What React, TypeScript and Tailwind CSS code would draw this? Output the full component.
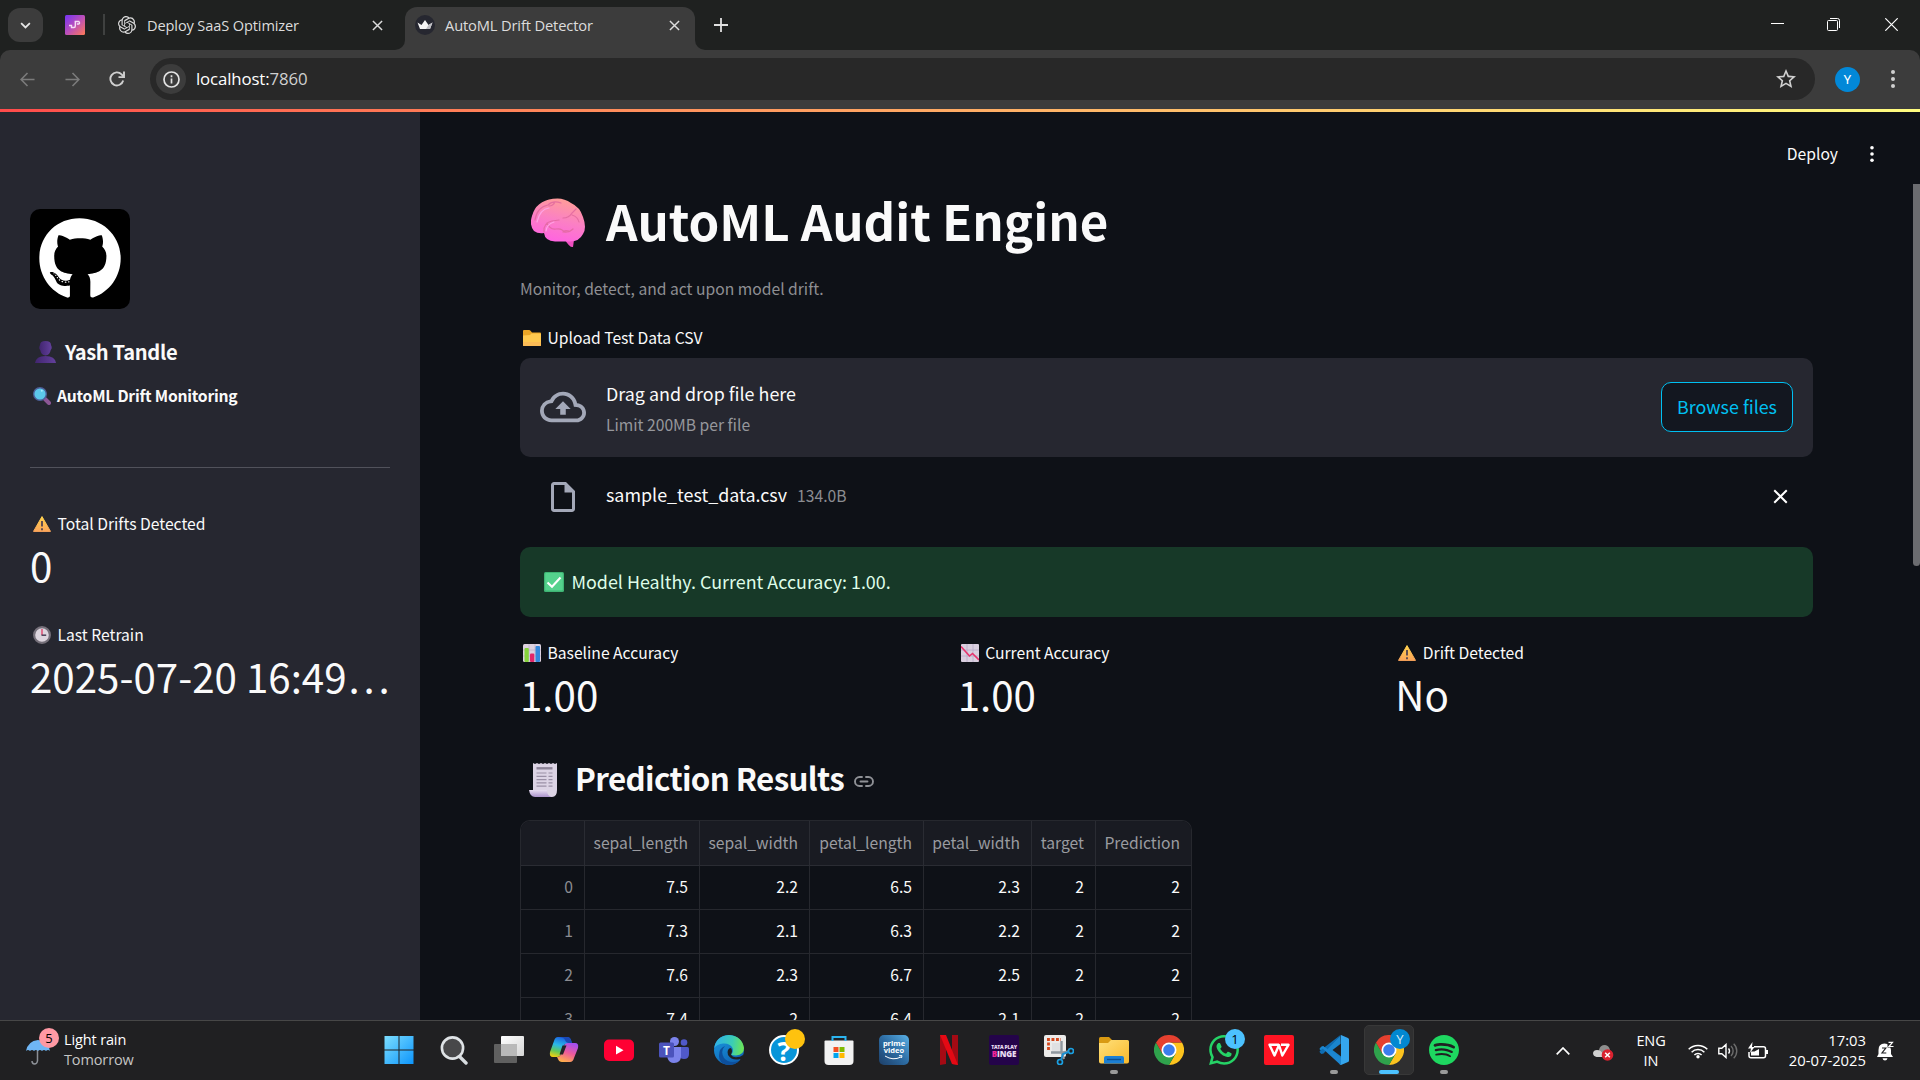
import React from "react";
import { FaGithub } from "react-icons/fa";
import { SiOpenai, SiSpotify, SiWhatsapp } from "react-icons/si";
import { MdOutlineCloudUpload, MdOutlineInsertDriveFile, MdStarOutline } from "react-icons/md";

type IconProps = { className?: string };

/* ---------- Emoji style icons ---------- */

const Bust = ({ className }: IconProps) => (
  <svg viewBox="0 0 21 22" className={className}>
    <defs>
      <linearGradient id="bust" x1="0" y1="0" x2="1" y2="0">
        <stop offset="0" stopColor="#41256f" />
        <stop offset="1" stopColor="#63409c" />
      </linearGradient>
    </defs>
    <path d="M5 4q0-4 5.500-4t5.500 4l.7 2q.2 2-1 3-.8 5-5.200 5.500Q6 14 5.200 9 4 8 4.300 6Z" fill="url(#bust)" />
    <path d="M0 22q1-7 10.500-7T21 22Z" fill="url(#bust)" />
  </svg>
);

const Magnifier = ({ className }: IconProps) => (
  <svg viewBox="0 0 18 18" className={className}>
    <path d="M12 12l4 4" stroke="#8d5796" strokeWidth="4" strokeLinecap="round" />
    <circle cx="7" cy="7" r="6.300" fill="#5cc8ea" stroke="#4d5f98" strokeWidth="1.400" />
    <circle cx="8.800" cy="3.800" r="1" fill="#a8ecff" />
  </svg>
);

const Warning = ({ className }: IconProps) => (
  <svg viewBox="0 0 18 16" className={className}>
    <defs>
      <linearGradient id="warn" x1="0" y1="0" x2="0" y2="1">
        <stop offset="0" stopColor="#ffd24d" />
        <stop offset="1" stopColor="#fba55a" />
      </linearGradient>
    </defs>
    <path d="M9 .6 17.500 15.400H.5Z" fill="url(#warn)" stroke="url(#warn)" strokeLinejoin="round" />
    <path d="M9 5v5.500M9 12.300v2" stroke="#5b4a52" strokeWidth="1.900" />
  </svg>
);

const Clock = ({ className }: IconProps) => (
  <svg viewBox="0 0 18 18" className={className}>
    <circle cx="9" cy="9" r="7.900" fill="#dcd5de" stroke="#75707a" strokeWidth="2.200" />
    <path d="M9 9V3" stroke="#e0456d" strokeWidth="1.400" />
    <path d="M8.500 9.200h4.700" stroke="#4a4158" strokeWidth="1.500" />
  </svg>
);

const Brain = ({ className }: IconProps) => (
  <svg viewBox="0 0 54 50" className={className}>
    <defs>
      <linearGradient id="brain" x1=".65" y1="0" x2=".35" y2="1">
        <stop offset="0" stopColor="#ff9e96" />
        <stop offset=".5" stopColor="#fb80c4" />
        <stop offset="1" stopColor="#ff62e2" />
      </linearGradient>
    </defs>
    <path d="M34 41l9 1-1 7q-3 1-8-7Z" fill="#ee4fc0" />
    <path
      d="M3 33Q-2 27 1 18 5 3 22 .8 32-1 40 5q9 4 12 14 4 11 0 17-4 8-14 7.500H24Q14 43 13 35 7 36 3 33Z"
      fill="url(#brain)"
    />
    <path
      d="M4 22Q6 9 17 7q5-5 13-2M13 34q-1-9 8-11l7-1M16 25q3 7 9 6t8 3q5 1 9-3M32 20q6 0 9-5l4-4M41 17q6 2 7 7M24 4q-2 4-6 4M38 33q-5-1-6 1"
      fill="none"
      stroke="#e0689f"
      strokeWidth="1.200"
      strokeLinecap="round"
      opacity=".85"
    />
    <path d="M6 24Q9 11 18 10M15 33q1-7 8-9" fill="none" stroke="#ffa3e4" strokeWidth="1.200" strokeLinecap="round" />
  </svg>
);

const Folder = ({ className }: IconProps) => (
  <svg viewBox="0 0 18 16" className={className}>
    <path d="M0 1q0-1 1-1h5q1 0 1.500.8L9 2.500h8q1 0 1 1V15q0 1-1 1H1q-1 0-1-1Z" fill="#eaa526" />
    <path d="M0 5.500 7 5l1.500-1.500H17q1 0 1 1V15q0 1-1 1H1q-1 0-1-1Z" fill="#ffc94f" />
    <path d="M0 12h18v3q0 1-1 1H1q-1 0-1-1Z" fill="#fbb65a" opacity=".7" />
  </svg>
);

const CheckMark = ({ className }: IconProps) => (
  <svg viewBox="0 0 20 20" className={className}>
    <rect width="20" height="20" rx="1.500" fill="#3fb574" />
    <rect x="1.200" y="1" width="17.600" height="17.600" rx="1" fill="#55d28d" />
    <path d="M3.500 10.500 8 14.800 16.500 5.500" fill="none" stroke="#fff" strokeWidth="2.100" />
  </svg>
);

const BarChart = ({ className }: IconProps) => (
  <svg viewBox="0 0 18 18" className={className}>
    <rect width="18" height="18" rx="1.500" fill="#ddd2e0" />
    <path d="M0 6h18M0 12h18M6 0v18M12 0v18" stroke="#bdb0c6" strokeWidth=".7" />
    <rect x="1.500" y="4" width="4.300" height="14" rx="1" fill="#86d33c" />
    <rect x="7" y="9.500" width="4.300" height="8.500" rx="1" fill="#e2276a" />
    <rect x="12.500" y="2" width="4.500" height="16" rx="1" fill="#3488dc" />
  </svg>
);

const DownChart = ({ className }: IconProps) => (
  <svg viewBox="0 0 18 18" className={className}>
    <rect width="18" height="18" rx="1" fill="#d9cfdf" />
    <path d="M0 6h18M0 12h18M6 0v18M12 0v18" stroke="#b9abc6" strokeWidth=".8" />
    <path d="M0 2.500 8.500 12l3-2.500L18 16" fill="none" stroke="#e7336c" strokeWidth="1.600" />
  </svg>
);

const Receipt = ({ className }: IconProps) => (
  <svg viewBox="0 0 28 35" className={className}>
    <defs>
      <linearGradient id="curl" x1="0" y1="0" x2="0" y2="1">
        <stop offset="0" stopColor="#e8def2" />
        <stop offset="1" stopColor="#ab93cc" />
      </linearGradient>
    </defs>
    <path d="M4 1l2 1 2-1 2 1 2-1 2 1 2-1 2 1 2-1 2 1 2-1 2 1 2-1v27q0 7-5 7H9L4 29Z" fill="#dcd4e5" />
    <path d="M0 28h18q0 6 5 7H6q-5 0-6-7Z" fill="url(#curl)" />
    <path d="M7.500 6.300h16" stroke="#8d8498" strokeWidth="2.400" />
    <path
      d="M7.500 11h10M19.500 11h4M7.500 14.300h10M19.500 14.300h4M7.500 17.600h10M19.500 17.600h4M7.500 20.900h10M19.500 20.900h4M7.500 24.200h10M19.500 24.200h4"
      stroke="#9a90a6"
      strokeWidth="1.200"
    />
  </svg>
);

const LinkIcon = ({ className }: IconProps) => (
  <svg viewBox="0 0 20 11" className={className} fill="none" stroke="#8f9196" strokeWidth="1.900" strokeLinecap="round">
    <path d="M8 1H5.500a4.500 4.500 0 0 0 0 9H8M12 1h2.500a4.500 4.500 0 0 1 0 9H12M6.500 5.500h7" />
  </svg>
);

/* ---------- Browser icons ---------- */

const Close = ({ className }: IconProps) => (
  <svg viewBox="0 0 12 12" className={className} fill="none" stroke="currentColor" strokeWidth="1.600">
    <path d="M1 1l10 10M11 1 1 11" />
  </svg>
);

const Arrow = ({ className }: IconProps) => (
  <svg viewBox="0 0 16 16" className={className} fill="none" stroke="#7b7b7b" strokeWidth="1.700">
    <path d="M15.500 8H1.500M8 1 1.200 8 8 15" />
  </svg>
);

const Reload = ({ className }: IconProps) => (
  <svg viewBox="0 0 16 16" className={className} fill="none" stroke="#d0d0d0" strokeWidth="1.900">
    <path d="M14.200 9.500A6.500 6.500 0 1 1 12.600 3.400L14.500 5.500" />
    <path d="M15 .5v5.600H9.500" />
  </svg>
);

const Info = ({ className }: IconProps) => (
  <svg viewBox="0 0 17 17" className={className} fill="none" stroke="#e3e3e3" strokeWidth="1.700">
    <circle cx="8.500" cy="8.500" r="7.500" />
    <path d="M8.500 7.600v5M8.500 4.200v2" />
  </svg>
);

const Dots = ({ className }: IconProps) => (
  <svg viewBox="0 0 6 20" className={className} fill="currentColor">
    <circle cx="3" cy="3" r="2" />
    <circle cx="3" cy="10" r="2" />
    <circle cx="3" cy="17" r="2" />
  </svg>
);

const CrownIcon = () => (
  <svg viewBox="0 0 20 20" className="size-5 shrink-0">
    <circle cx="10" cy="10" r="10" fill="#262730" />
    <path d="M2.500 7.500 6.500 10 10 5l3.500 5 4-2.500L15 14H5Z" fill="#f5f5f5" />
    <path d="M13.500 10l4-2.500L15 14h-4Z" fill="#bdbdc2" />
  </svg>
);

const PinnedIcon = () => (
  <svg viewBox="0 0 20 20" className="size-5 shrink-0">
    <defs>
      <linearGradient id="pin" x1="0" y1="0" x2="1" y2="1">
        <stop offset="0" stopColor="#7533f5" />
        <stop offset=".5" stopColor="#bb4fba" />
        <stop offset="1" stopColor="#ff7a55" />
      </linearGradient>
    </defs>
    <rect width="20" height="20" rx="1.500" fill="url(#pin)" />
    <path d="M4 10.500h2.500v2H9q1.300 0 1.300-1.500V6.500h3.500q1.500 1.500 0 2.500h-2" fill="none" stroke="#f5dcf5" strokeWidth="1.400" />
  </svg>
);

function TabStrip() {
  return (
    <div className="flex h-[50px] shrink-0 items-start bg-[#1f2120] text-[#dcdcdc]">
      <div className="mt-2 ml-2 flex h-[34px] w-[35px] items-center justify-center rounded-xl bg-[#3c3c3c]">
        <svg viewBox="0 0 12 8" className="h-[7px] w-[11px]" fill="none" stroke="#e6e6e6" strokeWidth="2">
          <path d="M1 1.200 6 6.200l5-5" />
        </svg>
      </div>
      <div className="mt-[15px] ml-[22px]">
        <PinnedIcon />
      </div>
      <div className="mt-[14px] ml-[18px] h-[21px] w-[2px] bg-[#3f4140]" />
      <div className="flex h-[50px] w-[282px] items-center pl-[13px]">
        <SiOpenai className="size-[18px] shrink-0" />
        <span className="mt-px ml-[11px] flex-1 font-['Open_Sans','Noto_Sans',sans-serif] text-[14.600px] leading-none whitespace-nowrap tracking-[-0.130px]">
          Deploy SaaS Optimizer
        </span>
        <Close className="mr-[4px] size-[11px]" />
      </div>
      <div className="ml-[8px] flex h-[50px] items-end">
        <div className="h-[10px] w-[10px] bg-[#3c3c3c]">
          <div className="h-full w-full rounded-br-[10px] bg-[#1f2120]" />
        </div>
        <div className="flex h-[43px] w-[290px] items-center rounded-t-[12px] bg-[#3c3c3c] pb-[7px] pl-[10px]">
          <CrownIcon />
          <span className="mt-px ml-[10px] flex-1 font-['Open_Sans','Noto_Sans',sans-serif] text-[14.700px] leading-none tracking-[-0.150px] whitespace-nowrap">
            AutoML Drift Detector
          </span>
          <Close className="mr-[15px] size-[11px]" />
        </div>
        <div className="h-[10px] w-[10px] bg-[#3c3c3c]">
          <div className="h-full w-full rounded-bl-[10px] bg-[#1f2120]" />
        </div>
      </div>
      <svg viewBox="0 0 14 14" className="mt-[18px] ml-[9px] size-[14px]" stroke="#e0e0e0" strokeWidth="1.800">
        <path d="M7 0v14M0 7h14" />
      </svg>
      <div className="mt-[18px] ml-auto flex items-center pr-[22px]">
        <svg viewBox="0 0 13 13" className="mr-[43px] size-[13px]" stroke="#fff">
          <path d="M0 5.500h13" />
        </svg>
        <svg viewBox="0 0 13 13" className="mr-[45px] size-[13px]" fill="none" stroke="#fff">
          <rect x=".5" y="2.500" width="10" height="10" rx="1" />
          <path d="M3 .5h7.500a2 2 0 0 1 2 2V10" />
        </svg>
        <svg viewBox="0 0 13 13" className="size-[13px]" stroke="#fff" strokeWidth="1.200">
          <path d="M.3.3l12.400 12.400M12.700.3.3 12.700" />
        </svg>
      </div>
    </div>
  );
}

function AddressBar() {
  return (
    <div className="h-[59px] shrink-0 bg-[#1f2120]">
      <div className="flex h-[59px] items-start rounded-t-[10px] bg-[#3c3c3c]">
        <div className="mt-2 flex h-[42px] w-full items-center">
          <Arrow className="ml-[20px] size-[15px]" />
          <Arrow className="ml-[30px] size-[15px] rotate-180" />
          <Reload className="ml-[29px] size-[16px]" />
          <div className="ml-[25px] flex h-[42px] w-[1665px] items-center rounded-full bg-[#282828]">
            <div className="ml-[6px] flex size-[30px] items-center justify-center rounded-full bg-[#3c3c3c]">
              <Info className="size-[17px]" />
            </div>
            <span className="mt-px ml-[10px] flex-1 font-['Open_Sans','Noto_Sans',sans-serif] text-[16.800px] leading-none tracking-[-0.120px] text-[#d0d0d0]">
              <span className="text-white">localhost:</span>7860
            </span>
            <MdStarOutline className="mr-[17px] size-[24px] text-[#d0d0d0]" />
          </div>
          <div className="ml-[20px] flex size-[25px] items-center justify-center rounded-full bg-[#0288d8] font-['Roboto',sans-serif] text-[13px] leading-none text-white">
            Y
          </div>
          <Dots className="ml-[30px] h-[20px] w-[6px] text-[#d0d0d0]" />
        </div>
      </div>
    </div>
  );
}

/* ---------- Streamlit page ---------- */

function Metric({ icon, label, value }: { icon: React.ReactNode; label: string; value: React.ReactNode }) {
  return (
    <div className="min-w-0">
      <div className="flex h-5 items-center pl-[3px] text-[15.670px] leading-none whitespace-nowrap">
        {icon}
        <span className="mt-[2px] ml-[6.500px]">{label}</span>
      </div>
      <div className="mt-[7px] h-[49px] text-[40.300px] leading-[49px] whitespace-nowrap">{value}</div>
    </div>
  );
}

function Sidebar() {
  return (
    <aside className="flex w-[420px] shrink-0 flex-col bg-[#262730] px-[30px] pt-[97px] text-[#fafafa]">
      <div className="flex size-[100px] shrink-0 items-center justify-center rounded-[10px] bg-black">
        <FaGithub className="size-[84px] text-white" />
      </div>
      <div className="mt-[30px] flex h-6 items-center pl-[5px] text-[20.100px] leading-none font-semibold tracking-[-0.340px] whitespace-nowrap">
        <Bust className="mt-[2px] h-[22px] w-[21px]" />
        <span className="mt-[2px] ml-[9px]">Yash Tandle</span>
      </div>
      <div className="mt-[22px] flex h-5 items-center pl-[3px] text-[15.670px] leading-none font-semibold tracking-[-0.230px] whitespace-nowrap">
        <Magnifier className="mt-[2px] size-[18px]" />
        <span className="mt-[2px] ml-[6px]">AutoML Drift Monitoring</span>
      </div>
      <div className="mt-[62px] h-px shrink-0 bg-[#51525b]" />
      <div className="mt-[45px]">
        <Metric icon={<Warning className="mt-[2px] h-[16px] w-[18px]" />} label="Total Drifts Detected" value="0" />
      </div>
      <div className="mt-[35px]">
        <Metric
          icon={<Clock className="mt-[2px] size-[18px]" />}
          label="Last Retrain"
          value={
            <>
              2025-07-20 16:49<span className="ml-[2px] tracking-[3.800px]">...</span>
            </>
          }
        />
      </div>
    </aside>
  );
}

const header = ["", "sepal_length", "sepal_width", "petal_length", "petal_width", "target", "Prediction"];
const rows = [
  ["0", "7.5", "2.2", "6.5", "2.3", "2", "2"],
  ["1", "7.3", "2.1", "6.3", "2.2", "2", "2"],
  ["2", "7.6", "2.3", "6.7", "2.5", "2", "2"],
  ["3", "7.4", "2", "6.4", "2.1", "2", "2"],
];

function ResultsTable() {
  return (
    <div className="w-[672px] shrink-0 overflow-hidden rounded-t-[10px] border border-b-0 border-[#26282e] text-[15.670px]">
      <div className="grid h-[45px] grid-cols-[64px_115px_110px_114px_108px_64px_95px] bg-[#191b22] text-[#9a9ba0]">
        {header.map((h) => (
          <div key={h} className="flex items-center justify-end border-r border-b border-[#2a2c33] pr-[11px] leading-none last:border-r-0">
            {h}
          </div>
        ))}
      </div>
      {rows.map((r) => (
        <div key={r[0]} className="grid h-[44px] grid-cols-[64px_115px_110px_114px_108px_64px_95px]">
          {r.map((c, i) => (
            <div
              key={i}
              className={`flex items-center justify-end border-r border-b border-[#26282e] pr-[11px] pb-[2px] leading-none last:border-r-0 ${i === 0 ? "text-[#8b8c91]" : "text-[#fafafa]"}`}
            >
              {c}
            </div>
          ))}
        </div>
      ))}
    </div>
  );
}

function Main() {
  return (
    <main className="relative flex flex-1 flex-col overflow-hidden bg-[#0e1117] text-[#fafafa]">
      <div className="flex h-[84px] shrink-0 items-center justify-end text-[15.670px] leading-none">
        <span>Deploy</span>
        <Dots className="mr-[45px] ml-[31px] h-[18px] w-[6px] text-white" />
      </div>
      <div className="absolute top-[72px] right-0 h-[382px] w-[7px] rounded-b-full bg-[#6b6c70]" />
      <div className="ml-[100px] flex w-[1293px] flex-col">
        <h1 className="flex h-12 items-center pl-[11px] text-[49.200px] leading-none font-bold whitespace-nowrap">
          <Brain className="mt-[5px] h-[50px] w-[54px] shrink-0" />
          <span className="ml-[21px]">AutoML Audit Engine</span>
        </h1>
        <p className="mt-[35px] h-5 text-[15.670px] leading-5 text-[#8e8f93]">Monitor, detect, and act upon model drift.</p>
        <div className="mt-[29px] flex h-5 items-center pl-[3px] text-[15.670px] leading-none">
          <Folder className="h-4 w-[18px]" />
          <span className="ml-[6.500px]">Upload Test Data CSV</span>
        </div>
        <div className="mt-[10px] flex h-[99px] items-center rounded-[10px] bg-[#262730] px-5 pb-[2px]">
          <MdOutlineCloudUpload className="size-[46px] text-[#a3a8b8]" />
          <div className="mt-[4px] ml-5 flex-1">
            <div className="text-[17.900px] leading-[31px]">Drag and drop file here</div>
            <div className="text-[15.670px] leading-[31px] text-[#96979c]">Limit 200MB per file</div>
          </div>
          <button className="h-[50px] w-[132px] rounded-[10px] border border-[#00c0f2] bg-[#131720] text-[17.900px] leading-none text-[#00c0f2]">
            Browse files
          </button>
        </div>
        <div className="mt-5 flex h-10 items-center pl-[25px] leading-none">
          <MdOutlineInsertDriveFile className="size-9 text-[#a3a8b8]" />
          <span className="-mt-[4px] ml-[25px] text-[17.900px]">sample_test_data.csv</span>
          <span className="-mt-[2px] ml-[10px] flex-1 text-[15.670px] text-[#8b8c91]">134.0B</span>
          <Close className="-mt-[2px] mr-[25px] size-[15px] text-white" />
        </div>
        <div className="mt-[30px] flex h-[70px] items-center rounded-[10px] bg-[#173928] pl-6 text-[17.900px] leading-none text-[#dffde9]">
          <CheckMark className="size-5" />
          <span className="ml-[7.500px]">Model Healthy. Current Accuracy: 1.00.</span>
        </div>
        <div className="mt-[25px] grid grid-cols-3 gap-5">
          <Metric icon={<BarChart className="mt-px size-[18px]" />} label="Baseline Accuracy" value="1.00" />
          <Metric icon={<DownChart className="mt-px size-[18px]" />} label="Current Accuracy" value="1.00" />
          <Metric icon={<Warning className="mt-[2px] h-4 w-[18px]" />} label="Drift Detected" value="No" />
        </div>
        <h3 className="mt-[40px] flex h-10 items-center pl-[9px] text-[31.300px] leading-none font-semibold tracking-[-0.620px] whitespace-nowrap">
          <Receipt className="mt-[3px] h-[35px] w-7" />
          <span className="ml-[18px]">Prediction Results</span>
          <LinkIcon className="mt-[7px] ml-[10px] h-[11px] w-5" />
        </h3>
        <div className="mt-[22px]">
          <ResultsTable />
        </div>
      </div>
    </main>
  );
}

/* ---------- Taskbar ---------- */

const StartIcon = () => (
  <svg viewBox="0 0 30 30" className="size-full">
    <defs>
      <linearGradient id="start" x1="0" y1="0" x2="30" y2="30" gradientUnits="userSpaceOnUse">
        <stop offset="0" stopColor="#7fe0ff" />
        <stop offset="1" stopColor="#0a93fb" />
      </linearGradient>
    </defs>
    <path d="M.5 1h14v13.500H.5ZM15.500 1h14v13.500h-14ZM.5 15.500h14V29H.5ZM15.500 15.500h14V29h-14Z" fill="url(#start)" />
  </svg>
);

const SearchIcon = () => (
  <svg viewBox="0 0 30 30" className="size-full">
    <path d="M20.500 21.500 27 28" stroke="#d7dce0" strokeWidth="3.400" strokeLinecap="round" />
    <circle cx="13.500" cy="13" r="10.600" fill="#48484a" stroke="#dfe3e6" strokeWidth="2.600" />
  </svg>
);

const TaskViewIcon = () => (
  <svg viewBox="0 0 30 30" className="size-full">
    <defs>
      <linearGradient id="tv" x1="0" y1="0" x2="1" y2="1">
        <stop offset="0" stopColor="#fff" />
        <stop offset="1" stopColor="#d5d5d5" />
      </linearGradient>
    </defs>
    <rect x="7" y="1" width="23" height="20" rx="1" fill="url(#tv)" />
    <rect x="0" y="9" width="23" height="19" rx="1" fill="#606060" />
    <path d="M7 9h16v12H7Z" fill="#b9b9b9" />
  </svg>
);

const CopilotIcon = () => (
  <svg viewBox="0 0 30 30" className="size-full">
    <defs>
      <linearGradient id="cpa" x1=".5" y1="0" x2=".2" y2="1">
        <stop offset="0" stopColor="#1b63e0" />
        <stop offset=".4" stopColor="#2ab7e8" />
        <stop offset=".7" stopColor="#62c85a" />
        <stop offset="1" stopColor="#f4d010" />
      </linearGradient>
      <linearGradient id="cpb" x1=".7" y1="0" x2=".3" y2="1">
        <stop offset="0" stopColor="#a34ff0" />
        <stop offset=".5" stopColor="#ee5a9b" />
        <stop offset="1" stopColor="#ffb04a" />
      </linearGradient>
    </defs>
    <path d="M9 2h9q3 0 4 3l1 4h-6q-2 0-3 3l-2 7q-1 3-4 3H4q-4 0-3-5L5 6q1-4 4-4Z" fill="url(#cpa)" />
    <path d="M21 27h-8q-3 0-4-3l-1-2q3 0 4-3l3-8q1-3 4-3h7q4 0 3 5l-4 10q-1 4-4 4Z" fill="url(#cpb)" />
    <path d="M9 2h9q3 0 4 3l1 3h-3q-3 0-4-3-1-3-7-3Z" fill="#1a48b5" />
    <path d="M13.500 10.500h4l-3.500 9h-3.500Z" fill="#232327" />
  </svg>
);

const YouTubeIcon = () => (
  <svg viewBox="0 0 30 30" className="size-full">
    <rect y="4.500" width="30" height="21.500" rx="5" fill="#ff0033" />
    <path d="M12 10.800v8.800l7.500-4.400Z" fill="#fff" />
  </svg>
);

const TeamsIcon = () => (
  <div className="relative size-full">
    <svg viewBox="0 0 30 30" className="size-full">
      <circle cx="15.500" cy="6.500" r="4.500" fill="#7b83eb" />
      <circle cx="25" cy="7.500" r="3.300" fill="#5059c9" />
      <path d="M20 12h8.500q1.500 0 1.500 1.500V19q0 5-5 5-4 0-5-3Z" fill="#5059c9" />
      <path d="M9 12h13v9q0 7-7 7-5 0-6.500-5Z" fill="#7b83eb" />
      <rect x="0" y="7.500" width="15" height="15" rx="1.500" fill="#4b53bc" />
    </svg>
    <span className="absolute top-[8px] left-0 w-[15px] text-center font-['Open_Sans',sans-serif] text-[12px] leading-[15px] font-bold text-white">
      T
    </span>
  </div>
);

const EdgeIcon = () => (
  <svg viewBox="0 0 30 30" className="size-full">
    <defs>
      <linearGradient id="edg" x1="0" y1=".4" x2="1" y2=".5">
        <stop offset="0" stopColor="#2fb0ea" />
        <stop offset=".6" stopColor="#3bcdb4" />
        <stop offset="1" stopColor="#6ee652" />
      </linearGradient>
      <linearGradient id="edb" x1="0" y1="0" x2=".6" y2="1">
        <stop offset="0" stopColor="#1b9be0" />
        <stop offset="1" stopColor="#0f63b5" />
      </linearGradient>
    </defs>
    <circle cx="15" cy="15" r="15" fill="url(#edb)" />
    <path d="M.2 13Q2 1 15 0q13 1 15 13 0 7-8 7.500-4 0-5-1 3-3 1.500-6.500Q16 8 9 8.500 3 9 .2 13Z" fill="url(#edg)" />
    <path d="M11 11q-5 5-1 12 5 6 15 3-5 5-12 4-8-2-8-9Q5 13 11 11Z" fill="#0d4f9c" />
    <path d="M17 19.500q1 2.500 5 2.700 4 0 7.500-2.500v2.800L30 26h-2l-2-2Q18 26 14 20q-1-3 0-5 1-2 3-2 2 3 0 6.500Z" fill="#202022" />
  </svg>
);

const HelpIcon = () => (
  <div className="relative flex size-full items-center justify-center rounded-full border-2 border-white bg-[#0795d9]">
    <span className="font-['Open_Sans',sans-serif] text-[27px] leading-none font-bold text-white">?</span>
    <div className="absolute -top-[8px] -right-[8px] size-5 rounded-full bg-[#ffc20e]" />
  </div>
);

const StoreIcon = () => (
  <svg viewBox="0 0 30 30" className="size-full">
    <path d="M.5 6.500q0-1 1-1h27q1 0 1 1V26q0 4-4 4h-21q-4 0-4-4Z" fill="#f2f2f2" />
    <path d="M8.500 6V2h13V6" fill="none" stroke="#2bb4ef" strokeWidth="2" />
    <path d="M9.500 12H14.500v5H9.500Z" fill="#f25022" />
    <path d="M15.500 12h5v5h-5Z" fill="#7fba00" />
    <path d="M9.500 18h5v5h-5Z" fill="#00a4ef" />
    <path d="M15.500 18h5v5h-5Z" fill="#ffb900" />
  </svg>
);

const PrimeIcon = () => (
  <div className="flex size-full flex-col items-center rounded-[5px] bg-gradient-to-tr from-[#1d3f68] via-[#2d6ca3] to-[#5ab1e6] pt-[5px] font-['Open_Sans',sans-serif] text-[7.500px] leading-[7px] font-bold text-white">
    <span>prime</span>
    <span>video</span>
    <svg viewBox="0 0 18 5" className="mt-[1px] h-[5px] w-[18px]" fill="none" stroke="#fff">
      <path d="M0 1q8 5 16 1M14 .7h3L16.500 3" />
    </svg>
  </div>
);

const NetflixIcon = () => (
  <svg viewBox="0 0 30 30" className="size-full">
    <path d="M6 0h6v29l-6 1ZM18 0h6v30l-6-1Z" fill="#a50a14" />
    <path d="M6 0h6l12 30-6-1Z" fill="#e50914" />
  </svg>
);

const BingeIcon = () => (
  <div className="flex size-full flex-col items-center justify-center rounded-[2px] bg-[#24044a] font-['Open_Sans',sans-serif] font-extrabold whitespace-nowrap text-[#eadcf2]">
    <span className="text-[5px] leading-[6px] tracking-[-0.2px]">TATA PLAY</span>
    <span className="text-[8px] leading-[7px] tracking-[-0.1px]">
      <span className="text-[#f0249a]">B</span>INGE
    </span>
  </div>
);

const SnipIcon = () => (
  <svg viewBox="0 0 30 30" className="size-full">
    <rect x="0" y="0" width="22" height="22" rx="2" fill="#ecebea" />
    <path d="M8 8h8v9H8Z" fill="#dfe0e2" />
    <path d="M4.500 3v13M3 4.500h14" fill="none" stroke="#d4471c" strokeWidth="2.800" strokeDasharray="2.900 1.600" />
    <path d="M17.500 6v11.500L20 24M7 17.500h12l6-1" fill="none" stroke="#8f979e" strokeWidth="2.400" />
    <circle cx="27" cy="16" r="2.500" fill="none" stroke="#1ba0e2" strokeWidth="1.700" />
    <circle cx="16" cy="27" r="2.500" fill="none" stroke="#1ba0e2" strokeWidth="1.700" />
    <path d="M24.500 17 19 19l-2 6" fill="none" stroke="#1b8fd2" strokeWidth="1.900" />
  </svg>
);

const ExplorerIcon = () => (
  <svg viewBox="0 0 30 30" className="size-full">
    <defs>
      <linearGradient id="fold" x1="0" y1="0" x2="1" y2="1">
        <stop offset="0" stopColor="#ffe07a" />
        <stop offset="1" stopColor="#f9b92c" />
      </linearGradient>
    </defs>
    <path d="M0 3.500Q0 2 1.500 2H10l3 3-3 4H0Z" fill="#d99a12" />
    <path d="M0 8h9l3-3h16.500Q30 5 30 6.500v20q0 2-2 2H2q-2 0-2-2Z" fill="url(#fold)" />
    <path d="M5 28.500V23q0-2 2-2h16q2 0 2 2v5.500Z" fill="#1c7fd3" />
    <path d="M8 24.500h14" stroke="#0b4f92" strokeWidth="1.400" />
  </svg>
);

const ChromeIcon = () => (
  <svg viewBox="0 0 30 30" className="size-full">
    <path d="M28 7.500A15 15 0 0 1 15 30L21.500 18.750 15 7.500Z" fill="#fcc31e" />
    <path d="M15 30A15 15 0 0 1 2 7.500L8.500 18.750h13Z" fill="#2fa24c" />
    <path d="M2 7.500a15 15 0 0 1 26 0H15L8.500 18.750Z" fill="#e5402f" />
    <circle cx="15" cy="15" r="7.500" fill="#fff" />
    <circle cx="15" cy="15" r="5.800" fill="#3b7ded" />
  </svg>
);

const WpsIcon = () => (
  <svg viewBox="0 0 30 30" className="size-full">
    <rect width="30" height="30" rx="2" fill="#ff1423" />
    <path
      d="M15 9.800H5.500L10.500 20.500 15 10 18.300 20.500 24.500 9.800H17"
      fill="none"
      stroke="#fff"
      strokeWidth="2.400"
      strokeLinejoin="round"
    />
  </svg>
);

const VsCodeIcon = () => (
  <svg viewBox="0 0 30 30" className="size-full">
    <path d="M21.500.5 4 17l-3-2.300Q0 14 1 13l1.500-1.500q1-.7 2 0L22 25Z" fill="#1a86ce" />
    <path d="M22 0 4.500 18.500 2.500 19 1 17.700q-.9-1 0-1.900L21.500 0Z" fill="#0f6db3" />
    <path d="M22 0l7 3q1 .5 1 1.500v21q0 1-1 1.500l-7 3q-1 0-1.500-.7L22 29V1Z" fill="#35a6ee" />
    <path d="M22 8.500 12.500 15 22 21.500V30l-1.500-1L2.500 12.500 4 11l18 12Z" fill="#1d87d2" />
    <path d="M22 8.500V21.500L13.500 15Z" fill="#202022" />
  </svg>
);

type TaskItem = { name: string; icon: React.ReactNode; badge?: string; badgeClass?: string; running?: boolean; active?: boolean };

const taskItems: TaskItem[] = [
  { name: "start", icon: <StartIcon /> },
  { name: "search", icon: <SearchIcon /> },
  { name: "taskview", icon: <TaskViewIcon /> },
  { name: "copilot", icon: <CopilotIcon /> },
  { name: "youtube", icon: <YouTubeIcon /> },
  { name: "teams", icon: <TeamsIcon /> },
  { name: "edge", icon: <EdgeIcon /> },
  { name: "help", icon: <HelpIcon /> },
  { name: "store", icon: <StoreIcon /> },
  { name: "prime", icon: <PrimeIcon /> },
  { name: "netflix", icon: <NetflixIcon /> },
  { name: "binge", icon: <BingeIcon /> },
  { name: "snip", icon: <SnipIcon /> },
  { name: "explorer", icon: <ExplorerIcon />, running: true },
  { name: "chrome", icon: <ChromeIcon /> },
  { name: "whatsapp", icon: <SiWhatsapp className="size-full text-[#25d366]" />, badge: "1", badgeClass: "bg-[#4cc2ff] text-black" },
  { name: "wps", icon: <WpsIcon /> },
  { name: "vscode", icon: <VsCodeIcon />, running: true },
  { name: "chrome-profile", icon: <ChromeIcon />, badge: "Y", badgeClass: "bg-[#0288d1] text-[#d8ecf8] text-[12px]", active: true },
  { name: "spotify", icon: <SiSpotify className="size-full text-[#1ed760]" />, running: true },
];

function Taskbar() {
  return (
    <div className="flex h-[60px] shrink-0 border-t border-[#474747] bg-[#202022] font-['Open_Sans','Noto_Sans',sans-serif] text-white">
      <div className="flex w-[374px] shrink-0 pl-[26px]">
        <div className="relative mt-[19px] h-[25px] w-[24px]">
          <svg viewBox="0 0 24 25" className="size-full">
            <path d="M11.500 9v12q-.5 3-3 3-2.500-.2-2.500-3" fill="none" stroke="#8b8f96" strokeWidth="1.500" />
            <path d="M0 11Q2 1 12 0q10 1 12 11-2-2-4 0-2-2-4 0-2-2-4 0-2-2-4 0-2-2-4 0-2-2-4 0Z" fill="#6fb6f5" />
          </svg>
          <div className="absolute -top-[12px] left-[13px] flex size-5 items-center justify-center rounded-full bg-[#ff99a4] text-[13px] leading-none text-black">
            5
          </div>
        </div>
        <div className="mt-[9px] ml-[14px] text-[14.500px] leading-5 tracking-[-0.130px]">
          <div>Light rain</div>
          <div className="text-[#c5c5c5]">Tomorrow</div>
        </div>
      </div>
      <div className="flex shrink-0 gap-[5px] pt-1">
        {taskItems.map((t) => (
          <div
            key={t.name}
            className={`flex size-[50px] flex-col items-center rounded-[5px] border ${t.active ? "border-[#383838] bg-[#2f2f30]" : "border-transparent"}`}
          >
            <div className="relative mt-[9px] size-[30px]">
              {t.icon}
              {t.badge && (
                <div
                  className={`absolute -top-[6px] -right-[6px] flex size-5 items-center justify-center rounded-full text-[13px] leading-none ${t.badgeClass}`}
                >
                  {t.badge}
                </div>
              )}
            </div>
            {t.running && <div className="mt-[5px] h-1 w-2 rounded-full bg-[#9a9a9a]" />}
            {t.active && <div className="mt-[5px] h-1 w-5 rounded-full bg-[#4cc2ff]" />}
          </div>
        ))}
      </div>
      <div className="ml-auto flex h-[59px] items-center pr-[26px]">
        <svg viewBox="0 0 14 8" className="h-2 w-[14px]" fill="none" stroke="#fff" strokeWidth="1.700">
          <path d="M.7 7.300 7 1l6.300 6.300" />
        </svg>
        <svg viewBox="0 0 21 17" className="mt-[3px] ml-[23px] h-[17px] w-[21px]">
          <path d="M6 6q1-5 6-5 4 .3 5 5l-7 7H3Z" fill="#8e8e8e" />
          <path d="M4 13q-4-.5-4-4 .5-3 4-3 4 0 6 4l3 3Z" fill="#d0d0d0" />
          <circle cx="14.500" cy="11" r="5.800" fill="#d9222f" />
          <path d="M12.200 8.700l4.600 4.600M16.800 8.700l-4.600 4.600" stroke="#fff" strokeWidth="1.500" />
        </svg>
        <div className="ml-[22px] w-[30px] text-center text-[14.500px] leading-5 tracking-[-0.1px]">
          <div>ENG</div>
          <div>IN</div>
        </div>
        <svg viewBox="0 0 20 16" className="ml-[22px] h-4 w-5" fill="none" stroke="#fff" strokeWidth="1.500">
          <path d="M.7 6.300a13 13 0 0 1 18.600 0M3.600 9.200a9 9 0 0 1 12.800 0M6.400 12a5 5 0 0 1 7.200 0" />
          <circle cx="10" cy="13.800" r="1.700" fill="#fff" stroke="none" />
        </svg>
        <svg viewBox="0 0 20 16" className="ml-[10px] h-4 w-5" fill="none" stroke="#fff" strokeWidth="1.400">
          <path d="M.8 5.300h3L8 1.500v13L3.800 10.700h-3ZM10.500 5.500a4 4 0 0 1 0 5" />
          <path d="M13 3a7 7 0 0 1 0 10M15.700.8a10 10 0 0 1 0 14.400" stroke="#6d6d6d" />
        </svg>
        <svg viewBox="0 0 20 18" className="ml-[10px] h-[18px] w-5">
          <path d="M6 4.700h9.500a2 2 0 0 1 2 2v7a2 2 0 0 1-2 2H3a2 2 0 0 1-2-2V10" fill="none" stroke="#fff" strokeWidth="1.500" />
          <path d="M18 8h2v4h-2Z" fill="#fff" />
          <path d="M3 9.500h3.500L11 7v6.500H3Z" fill="#fff" />
          <path d="M4.500 0 0 6.500h3L2 11l4.500-6H4Z" fill="#fff" />
        </svg>
        <div className="-mt-[2px] ml-[17px] w-[81px] text-right text-[14.800px] leading-5 whitespace-nowrap">
          <div>17:03</div>
          <div>20-07-2025</div>
        </div>
        <svg viewBox="0 0 17 20" className="ml-[11px] h-5 w-[17px]">
          <path d="M1.500 9q0-6.500 6-6.500T14 9v4l2 3H0l1.500-3ZM5.500 17.200h5q-.5 2.300-2.500 2.300t-2.500-2.300Z" fill="#fff" />
          <path d="M5 7h3.800L5 12h4.300" fill="none" stroke="#202022" strokeWidth="1.200" />
          <path d="M10.500.2H17v6.300h-6.500Z" fill="#202022" />
          <path d="M11.500 1.300h4L12 5.500h4.500" fill="none" stroke="#fff" strokeWidth="1.200" />
        </svg>
      </div>
    </div>
  );
}

export default function App() {
  return (
    <div className="flex h-[1080px] w-[1920px] flex-col overflow-hidden bg-[#0e1117] font-['Noto_Sans_CJK_SC',sans-serif]">
      <TabStrip />
      <AddressBar />
      <div className="h-[3px] shrink-0 bg-gradient-to-r from-[#ff4b4b] to-[#fffd80]" />
      <div className="flex h-[908px] shrink-0 overflow-hidden">
        <Sidebar />
        <Main />
      </div>
      <Taskbar />
    </div>
  );
}
